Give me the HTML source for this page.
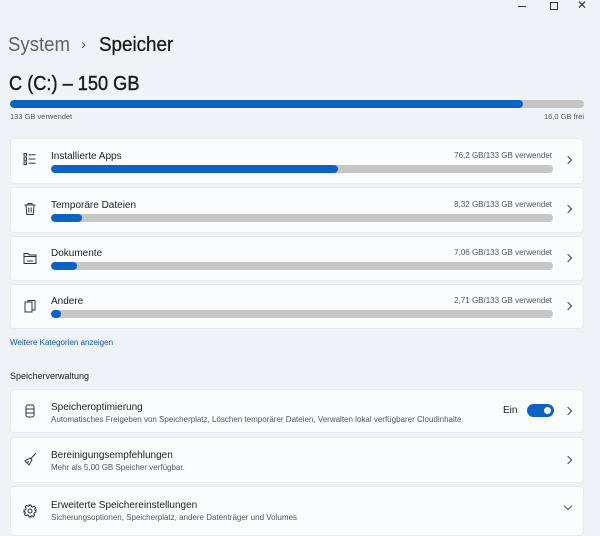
<!DOCTYPE html>
<html><head><meta charset="utf-8"><style>
*{margin:0;padding:0;box-sizing:border-box}
body{width:600px;height:530px;overflow:hidden;background:#eff3f8;font-family:"Liberation Sans",sans-serif;color:#1b1b1b;position:relative}
.a{position:absolute}
.card{position:absolute;left:10px;width:574px;background:#fbfcfd;border-radius:4px;border:1px solid #e6e9ee}
.bar{position:absolute;left:40px;width:502px;height:8px;border-radius:4px;background:#c6c6c6;overflow:hidden}
.bar i{position:absolute;left:0;top:0;bottom:0;background:#0d63c4;border-radius:4px}
.lbl{position:absolute;left:40px;font-size:10px;color:#222}
.r{position:absolute;right:31px;font-size:8px;color:#555}
.chev{position:absolute;right:12px;width:6px;height:6px;border-right:1.2px solid #444;border-top:1.2px solid #444;transform:rotate(45deg)}
.ic{position:absolute;left:12px}
.sub{position:absolute;left:40px;font-size:8px;color:#555}
</style></head><body>
<div class="a" style="left:518px;top:6px;width:8px;border-top:1px solid #333"></div>
<div class="a" style="left:550px;top:2px;width:8px;height:8px;border:1px solid #333"></div>
<div class="a" style="left:577px;top:-2px;font-size:12px;color:#333">✕</div>
<div class="a" style="left:8px;top:34px;font-size:20px;color:#5f6368;transform:scaleX(0.93);transform-origin:left">System</div>
<div class="a" style="left:81px;top:36px;font-size:15px;color:#555">›</div>
<div class="a" style="left:99px;top:34px;font-size:20px;color:#1b1b1b;transform:scaleX(0.94);transform-origin:left;-webkit-text-stroke:0.3px #1b1b1b">Speicher</div>
<div class="a" style="left:9px;top:73px;font-size:20px;color:#1b1b1b;transform:scaleX(0.91);transform-origin:left;-webkit-text-stroke:0.4px #1b1b1b">C (C:) – 150 GB</div>
<div class="a" style="left:10px;top:100px;width:574px;height:8px;border-radius:4px;background:#c6c6c6;overflow:hidden"><div style="width:513px;height:8px;background:#0d63c4;border-radius:4px"></div></div>
<div class="a" style="left:10px;top:112px;font-size:7.5px;color:#555">133 GB verwendet</div>
<div class="a" style="right:16px;top:112px;font-size:7.5px;color:#555">16,0 GB frei</div>

<div class="card" style="top:138px;height:46px">
<svg class="ic" style="top:13px" width="14" height="14" viewBox="0 0 14 14" fill="none" stroke="#333" stroke-width="1"><rect x="1" y="1.5" width="2.5" height="2.5"/><rect x="1" y="5.8" width="2.5" height="2.5"/><rect x="1" y="10" width="2.5" height="2.5"/><path d="M5.5 2.7h7M5.5 7h7M5.5 11.3h7"/></svg>
<div class="lbl" style="top:12px">Installierte Apps</div><div class="r" style="top:12px">76,2 GB/133 GB verwendet</div>
<div class="bar" style="top:26px"><i style="width:287px"></i></div><div class="chev" style="top:18px"></div></div>

<div class="card" style="top:187px;height:46px">
<svg class="ic" style="top:14px" width="14" height="14" viewBox="0 0 14 14" fill="none" stroke="#333" stroke-width="1"><path d="M1.5 3h11M5 3V1.5h4V3M3 3l.8 9.5h6.4L11 3M5.8 5.5v5M8.2 5.5v5"/></svg>
<div class="lbl" style="top:12px">Temporäre Dateien</div><div class="r" style="top:12px">8,32 GB/133 GB verwendet</div>
<div class="bar" style="top:26px"><i style="width:31px"></i></div><div class="chev" style="top:18px"></div></div>

<div class="card" style="top:236px;height:45px">
<svg class="ic" style="top:14px" width="14" height="14" viewBox="0 0 14 14" fill="none" stroke="#333" stroke-width="1"><path d="M1 2.5h4l1.3 1.5H13v8.5H1zM1 5.5h12M4 10h6"/></svg>
<div class="lbl" style="top:11px">Dokumente</div><div class="r" style="top:11px">7,06 GB/133 GB verwendet</div>
<div class="bar" style="top:25px"><i style="width:26px"></i></div><div class="chev" style="top:18px"></div></div>

<div class="card" style="top:284px;height:45px">
<svg class="ic" style="top:14px" width="14" height="14" viewBox="0 0 14 14" fill="none" stroke="#333" stroke-width="1"><path d="M2 3h7v10H2zM5 3V1.5h7V11H9"/></svg>
<div class="lbl" style="top:11px">Andere</div><div class="r" style="top:11px">2,71 GB/133 GB verwendet</div>
<div class="bar" style="top:25px"><i style="width:10px"></i></div><div class="chev" style="top:18px"></div></div>

<div class="a" style="left:10px;top:338px;font-size:8px;color:#0a56b0">Weitere Kategorien anzeigen</div>
<div class="a" style="left:10px;top:371px;font-size:9px;color:#1b1b1b">Speicherverwaltung</div>

<div class="card" style="top:389px;height:44px">
<svg class="ic" style="top:14px" width="14" height="14" viewBox="0 0 14 14" fill="none" stroke="#333" stroke-width="1"><rect x="3" y="1" width="8" height="12" rx="2"/><path d="M3 5h8M3 9h8"/></svg>
<div class="lbl" style="top:12px">Speicheroptimierung</div><div class="sub" style="top:25px">Automatisches Freigeben von Speicherplatz, Löschen temporärer Dateien, Verwalten lokal verfügbarer Cloudinhalte</div>
<div class="a" style="left:492px;top:15px;font-size:10px;color:#222">Ein</div>
<div class="a" style="left:516px;top:14px;width:27px;height:13px;border-radius:7px;background:#0d63c4"><div style="position:absolute;right:3px;top:3px;width:7px;height:7px;border-radius:50%;background:#fff"></div></div>
<div class="chev" style="top:18px"></div></div>

<div class="card" style="top:437px;height:46px">
<svg class="ic" style="top:14px" width="14" height="14" viewBox="0 0 14 14" fill="none" stroke="#333" stroke-width="1"><path d="M13 1L7.5 7M7 6l-5 3 4 4 3-5zM4 11l2-2"/></svg>
<div class="lbl" style="top:12px">Bereinigungsempfehlungen</div><div class="sub" style="top:25px">Mehr als 5,00 GB Speicher verfügbar.</div>
<div class="chev" style="top:19px"></div></div>

<div class="card" style="top:486px;height:50px">
<svg class="ic" style="top:17px" width="14" height="14" viewBox="0 0 14 14" fill="none" stroke="#333" stroke-width="1"><circle cx="7" cy="7" r="2"/><path d="M6 1h2l.4 1.6 1.4.6 1.4-.9 1.4 1.4-.9 1.4.6 1.4L13 6v2l-1.6.4-.6 1.4.9 1.4-1.4 1.4-1.4-.9-1.4.6L8 13H6l-.4-1.6-1.4-.6-1.4.9-1.4-1.4.9-1.4-.6-1.4L1 8V6l1.6-.4.6-1.4-.9-1.4 1.4-1.4 1.4.9 1.4-.6z"/></svg>
<div class="lbl" style="top:13px">Erweiterte Speichereinstellungen</div><div class="sub" style="top:26px">Sicherungsoptionen, Speicherplatz, andere Datenträger und Volumes</div>
<div class="chev" style="top:16px;transform:rotate(135deg)"></div></div>
</body></html>
